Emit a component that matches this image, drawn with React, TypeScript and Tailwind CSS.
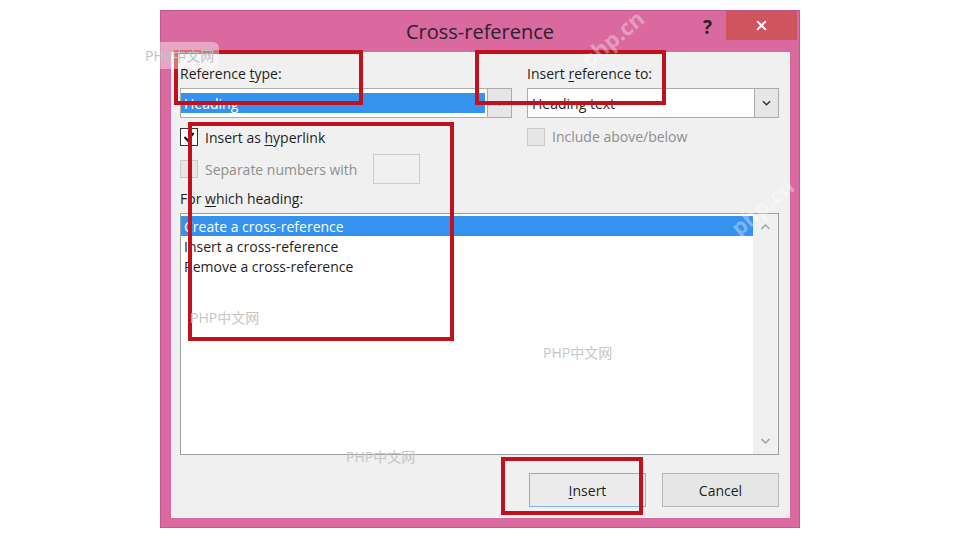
import type { ReactNode } from 'react'

const font = { fontFamily: '"Open Sans", "Noto Sans", "Noto Sans CJK SC", sans-serif' }

function Chevron({ up = false, className = '' }: { up?: boolean; className?: string }) {
  return (
    <svg viewBox="0 0 10 6" className={className} fill="none" stroke="currentColor" strokeWidth="1.6">
      {up ? <polyline points="1,5 5,1 9,5" /> : <polyline points="1,1 5,5 9,1" />}
    </svg>
  )
}

function CheckBox({ checked = false, disabled = false }: { checked?: boolean; disabled?: boolean }) {
  return (
    <div
      className={`flex h-[18px] w-[18px] shrink-0 items-center justify-center border ${
        disabled ? 'border-[#cacaca] bg-[#e6e6e6]' : 'border-[#333] bg-white'
      }`}
    >
      {checked && (
        <svg viewBox="0 0 12 12" className="h-[12px] w-[12px]" fill="none" stroke="#1a1a1a" strokeWidth="2.2">
          <polyline points="1.5,6 4.8,9.5 10.5,2" />
        </svg>
      )}
    </div>
  )
}

function Key({ children }: { children: ReactNode }) {
  return <span className="underline underline-offset-2">{children}</span>
}

function RedBox({ className }: { className: string }) {
  return <div className={`pointer-events-none absolute border-[4px] border-[#c0121c] ${className}`} />
}

function Mark({ className }: { className: string }) {
  return (
    <div className={`pointer-events-none absolute -rotate-[40deg] text-[22px] font-bold text-white/35 ${className}`}>
      php.cn
    </div>
  )
}

const headings = ['Create a cross-reference', 'Insert a cross-reference', 'Remove a cross-reference']

export default function App() {
  return (
    <div className="relative h-[540px] w-[960px] overflow-hidden bg-white pl-[160px] pt-[10px]" style={font}>
      <div className="relative flex h-[518px] w-[640px] flex-col border border-[#c2568d] bg-[#d9699f]">
        {/* title bar */}
        <div className="grid h-[41px] shrink-0 grid-cols-[1fr_auto_1fr]">
          <div />
          <div className="self-center text-[20px] text-[#2a2230]">Cross-reference</div>
          <div className="flex items-start justify-end pr-[2px]">
            <div className="mr-[14px] mt-[5px] text-[19px] font-bold leading-[22px] text-[#2a2230]">?</div>
            <div className="flex h-[29px] w-[71px] items-center justify-center bg-[#cf545d] text-white">
              <svg viewBox="0 0 10 10" className="h-[11px] w-[11px]" stroke="white" strokeWidth="1.8">
                <line x1="1" y1="1" x2="9" y2="9" />
                <line x1="9" y1="1" x2="1" y2="9" />
              </svg>
            </div>
          </div>
        </div>

        {/* dialog body */}
        <div className="mb-[9px] ml-[10px] mr-[9px] flex flex-1 flex-col bg-[#f0f0f0] pl-[9px] pr-[11px] pt-[13px] text-[14px] text-[#1e1e1e]">
          <div className="flex gap-[15px]">
            <div className="w-[332px]">
              <div className="h-[18px] leading-[18px]">
                Reference <Key>t</Key>ype:
              </div>
              <div className="mt-[5px] flex h-[30px] border border-[#acacac] bg-white">
                <div className="flex-1 py-[4px]">
                  <div className="flex h-full items-center bg-[#3592ee] pl-[3px] text-white">Heading</div>
                </div>
                <div className="ml-[2px] flex w-[24px] items-center justify-center border-l border-[#acacac] bg-[#e6e6e6] text-[#555]">
                  <Chevron className="h-[6px] w-[9px]" />
                </div>
              </div>
              <div className="mt-[10px] flex h-[18px] items-center gap-[7px]">
                <CheckBox checked />
                <span>
                  Insert as <Key>h</Key>yperlink
                </span>
              </div>
              <div className="mt-[8px] flex h-[30px] items-center">
                <div className="flex w-[193px] items-center gap-[7px] text-[#8e8e8e]">
                  <CheckBox disabled />
                  <span>Separate numbers with</span>
                </div>
                <div className="h-[30px] w-[47px] border border-[#cccccc] bg-[#f0f0f0]" />
              </div>
            </div>

            <div className="w-[252px]">
              <div className="h-[18px] leading-[18px]">
                Insert <Key>r</Key>eference to:
              </div>
              <div className="mt-[5px] flex h-[30px] border border-[#acacac] bg-white">
                <div className="flex flex-1 items-center pl-[4px]">Heading text</div>
                <div className="flex w-[24px] items-center justify-center border-l border-[#acacac] bg-[#e6e6e6] text-[#333]">
                  <Chevron className="h-[6px] w-[9px]" />
                </div>
              </div>
              <div className="mt-[9px] flex h-[19px] items-center gap-[7px] text-[#8e8e8e]">
                <CheckBox disabled />
                <span>Include above/below</span>
              </div>
            </div>
          </div>

          <div className="mt-[6px] h-[18px] leading-[18px]">
            For <Key>w</Key>hich heading:
          </div>

          {/* heading list */}
          <div className="mt-[5px] flex h-[242px] border border-[#9a9ea6] bg-white">
            <div className="flex-1 pt-[2px]">
              {headings.map((h, i) => (
                <div
                  key={h}
                  className={`flex h-[20px] items-center pl-[3px] ${i === 0 ? 'bg-[#3592ee] text-white' : ''}`}
                >
                  {h}
                </div>
              ))}
            </div>
            <div className="flex w-[25px] flex-col items-center justify-between bg-[#f0f0f0] py-[10px] text-[#a6a6a6]">
              <Chevron up className="h-[6px] w-[11px]" />
              <Chevron className="h-[6px] w-[11px]" />
            </div>
          </div>

          <div className="mt-[18px] flex justify-end gap-[16px]">
            <div className="flex h-[34px] w-[117px] items-center justify-center border border-[#7fb2e6] bg-[#ebebeb]">
              <span>
                <Key>I</Key>nsert
              </span>
            </div>
            <div className="flex h-[34px] w-[117px] items-center justify-center border border-[#b8b8b8] bg-[#e6e6e6]">
              Cancel
            </div>
          </div>
        </div>

        {/* annotation frames */}
        <RedBox className="left-[13px] top-[39px] h-[55px] w-[189px]" />
        <RedBox className="left-[314px] top-[39px] h-[55px] w-[191px]" />
        <RedBox className="left-[27px] top-[111px] h-[219px] w-[266px]" />
        <RedBox className="left-[340px] top-[446px] h-[58px] w-[142px]" />
      </div>

      {/* watermarks */}
      <div className="pointer-events-none absolute left-[140px] top-[42px] rounded-[6px] bg-white/40 px-[5px] py-[3px] text-[14px] text-[#c2c2c2]">
        PHP中文网
      </div>
      <div className="pointer-events-none absolute left-[190px] top-[307px] text-[14px] text-[#c6c6c6]">PHP中文网</div>
      <div className="pointer-events-none absolute left-[543px] top-[342px] text-[14px] text-[#c6c6c6]">PHP中文网</div>
      <div className="pointer-events-none absolute left-[346px] top-[446px] text-[14px] text-[#c6c6c6]">PHP中文网</div>
      <Mark className="left-[575px] top-[22px]" />
      <Mark className="left-[510px] top-[280px]" />
      <Mark className="left-[725px] top-[190px]" />
      <Mark className="left-[290px] top-[380px]" />
    </div>
  )
}
